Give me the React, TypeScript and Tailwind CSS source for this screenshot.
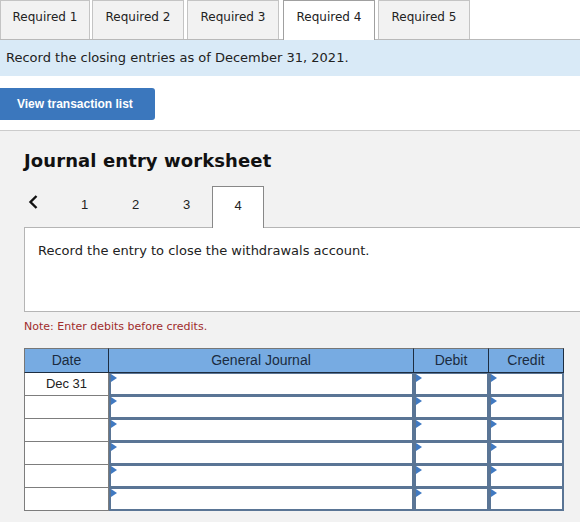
import React from 'react'

const verdana = "font-['Verdana','DejaVu_Sans',sans-serif]"
const arial = "font-['Arial','Liberation_Sans',sans-serif]"

const tabs = [
  { label: 'Required 1', cls: 'w-[90px] mr-[2px]' },
  { label: 'Required 2', cls: 'w-[92px] mr-[3px]' },
  { label: 'Required 3', cls: 'w-[92px] mr-[4px]' },
  { label: 'Required 4', cls: 'w-[92px] mr-[3px]' },
  { label: 'Required 5', cls: 'w-[92px] mr-[3px]' }
]
const ACTIVE_TAB = 3

const Tabs: React.FC = () => (
  <div className="flex h-[40px] relative">
    <div className="absolute left-0 right-0 bottom-0 h-px bg-[#b9b9b9]" />
    {tabs.map((t, i) => (
      <div
        key={t.label}
        className={`${t.cls} relative z-10 flex items-center justify-center text-[12px] text-[#222] border border-b-0 ${
          i === ACTIVE_TAB
            ? 'bg-white border-[#a0a0a0] h-[40px]'
            : 'bg-[#f2f2f2] border-[#c4c4c4] h-[39px]'
        }`}
      >
        <span className="-mt-[7px]">{t.label}</span>
      </div>
    ))}
  </div>
)

// small blue marker in the top-left corner of each entry cell
const Marker: React.FC = () => (
  <span className="absolute left-0 top-0 w-0 h-0 border-y-[4px] border-y-transparent border-l-[6px] border-l-[#4079c1]" />
)

const EntryCell: React.FC = () => (
  <div className="relative h-[23px] bg-white border-l-2 border-r-2 border-t border-b-2 border-[#5a7595]">
    <Marker />
  </div>
)

const headCell =
  'h-[25px] flex items-center justify-center bg-[#77abe2] border-t border-t-[#777] border-b border-r border-[#1d2d40] text-[#1b2b40] text-[14px]'

const JournalTable: React.FC = () => {
  const rows = ['Dec 31', '', '', '', '', '']
  return (
    <div className={`${arial} w-[540px] grid grid-cols-[85px_305px_75px_75px] text-[13px]`}>
      <div className={`${headCell} border-l border-l-[#777]`}>Date</div>
      <div className={headCell}>General Journal</div>
      <div className={headCell}>Debit</div>
      <div className={headCell}>Credit</div>
      {rows.map((d, i) => (
        <React.Fragment key={i}>
          <div className="h-[23px] flex items-center justify-center bg-white border-l border-b border-r border-[#7d7d7d] text-[#222]">
            {d}
          </div>
          <EntryCell />
          <EntryCell />
          <EntryCell />
        </React.Fragment>
      ))}
    </div>
  )
}

export default function App() {
  return (
    <div className={`${verdana} w-[580px] h-[522px] overflow-hidden bg-white`}>
      <Tabs />
      <div className="h-[36px] bg-[#d9eaf7] flex items-center px-[6px] text-[13px] text-[#222]">
        Record the closing entries as of December 31, 2021.
      </div>
      <div className="pt-[12px] pb-[10px]">
        <button
          className={`${arial} w-[155px] h-[32px] rounded-r-[3px] bg-[#3b77bd] text-white text-[12px] font-bold text-left pl-[17px]`}
        >
          View transaction list
        </button>
      </div>
      <div className="border-t border-[#cccccc] bg-[#f2f2f2] h-[400px] pl-[24px]">
        <h2 className="pt-[19px] text-[18px] font-bold text-[#111] leading-[22px] tracking-[0.1px]">
          Journal entry worksheet
        </h2>
        <div className={`${arial} mt-[14px] flex items-end h-[41px] text-[13px] text-[#222]`}>
          <div className="w-[35px] h-[41px] flex items-start pt-[8px] pl-[4px]">
            <svg width="11" height="16" viewBox="0 0 11 16">
              <path d="M8.5 2 L2.5 8 L8.5 14" fill="none" stroke="#111" strokeWidth="2.4" />
            </svg>
          </div>
          {['1', '2', '3'].map(n => (
            <div key={n} className="w-[51px] h-[41px] flex justify-center pt-[9px]">
              {n}
            </div>
          ))}
          <div className="w-[52px] h-[42px] -mb-px relative z-10 flex justify-center pt-[9px] bg-white border border-b-0 border-[#888]">
            4
          </div>
        </div>
        <div className="h-[85px] bg-white border border-r-0 border-[#b5b5b5] pl-[13px] pt-[13px] text-[13px] text-[#222]">
          Record the entry to close the withdrawals account.
        </div>
        <div className="mt-[8px] text-[11px] text-[#a02c2c] leading-[14px]">
          Note: Enter debits before credits.
        </div>
        <div className="mt-[14px]">
          <JournalTable />
        </div>
      </div>
    </div>
  )
}
